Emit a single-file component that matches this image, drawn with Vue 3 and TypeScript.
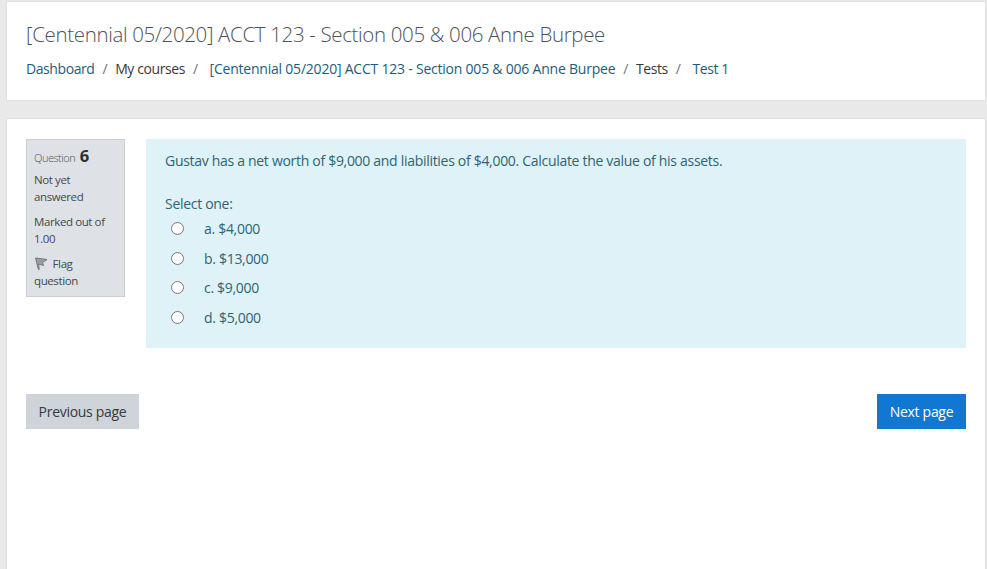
<template>
  <div class="page">
    <header class="card head">
      <h1>{{ course }}</h1>
      <nav class="crumbs">
        <a>Dashboard</a><span class="sep">/</span>
        <span class="plain">My courses</span><span class="sep wide">/</span>
        <a class="long">{{ course }}</a><span class="sep">/</span>
        <span class="plain">Tests</span><span class="sep wide">/</span>
        <a>Test 1</a>
      </nav>
    </header>
    <main class="card body">
      <section class="question">
        <aside class="info">
          <div class="qno"><span>Question</span> <b>6</b></div>
          <p>Not yet answered</p>
          <p>Marked out of 1.00</p>
          <p class="flag">
            <svg width="14" height="14" viewBox="0 0 14 14">
              <path d="M1.5 1 L13 2.5 L8.5 5.5 L9.5 8.5 L4.6 7 L5.2 12.5 L4.4 12.5 Z" fill="#9a9ea3" stroke="#74787d" stroke-width="1" stroke-linejoin="round" />
            </svg>
            Flag question
          </p>
        </aside>
        <div class="content">
          <p class="text">Gustav has a net worth of $9,000 and liabilities of $4,000. Calculate the value of his assets.</p>
          <div class="prompt">Select one:</div>
          <label v-for="o in options" :key="o" class="opt">
            <input type="radio" name="q6" />
            <span>{{ o }}</span>
          </label>
        </div>
      </section>
      <div class="actions">
        <button class="prev">Previous page</button>
        <button class="next">Next page</button>
      </div>
    </main>
  </div>
</template>

<script setup lang="ts">
const course = '[Centennial 05/2020] ACCT 123 - Section 005 & 006 Anne Burpee'
const options: string[] = ['a. $4,000', 'b. $13,000', 'c. $9,000', 'd. $5,000']
</script>

<style scoped>
.page {
  height: 569px;
  overflow: hidden;
  background: #e9e9e9;
  padding: 1px 1px 0 6px;
  box-sizing: border-box;
  font-family: "Open Sans", "Noto Sans", sans-serif;
  font-size: 14px;
  color: #373a3c;
}
.card {
  background: #fff;
  border: 1px solid #e2e2e2;
  box-sizing: border-box;
}
.head {
  height: 100px;
  padding: 17px 19px 0;
}
h1 {
  margin: 0;
  font-size: 20.5px;
  font-weight: 300;
  line-height: 30px;
  color: #4f5256;
  letter-spacing: -0.35px;
  white-space: nowrap;
}
.crumbs {
  margin-top: 10px;
  line-height: 20px;
  font-size: 14px;
  letter-spacing: -0.42px;
  white-space: nowrap;
}
.crumbs a {
  color: #1d5c7c;
}
.crumbs .long {
  letter-spacing: -0.22px;
}
.plain {
  color: #373a3c;
}
.sep {
  color: #6a737b;
  margin: 0 8px;
}
.sep.wide {
  margin-right: 12px;
}
.body {
  margin-top: 17px;
  height: 461px;
  padding: 20px 19px 0;
}
.question {
  display: flex;
  align-items: flex-start;
  gap: 21px;
}
.info {
  width: 99px;
  height: 158px;
  flex: none;
  box-sizing: border-box;
  background: #dee2e6;
  border: 1px solid #cbcfd3;
  padding: 6px 7px 0;
  font-size: 11.5px;
  line-height: 17px;
  letter-spacing: -0.4px;
  color: #45484b;
}
.qno {
  line-height: 20px;
  color: #4f5256;
}
.qno span {
  font-size: 11px;
  font-weight: 300;
  letter-spacing: -0.5px;
}
.qno b {
  font-size: 16.5px;
  font-weight: 700;
  color: #2b2e31;
  margin-left: 2px;
}
.info p {
  margin: 3px 0 0;
}
.info p + p {
  margin-top: 8px;
}
.flag svg {
  vertical-align: -3px;
  margin-right: 2px;
}
.content {
  flex: 1;
  height: 209px;
  box-sizing: border-box;
  background: #def2f8;
  padding: 12px 19px 0;
  color: #2f6473;
  font-size: 14px;
  letter-spacing: -0.3px;
}
.text {
  margin: 0;
  line-height: 20px;
}
.prompt {
  margin-top: 23px;
  line-height: 20px;
}
.opt {
  display: flex;
  align-items: center;
  height: 29.6px;
  padding-left: 6px;
}
.opt input {
  width: 13px;
  height: 13px;
  margin: 0 20px 0 0;
  flex: none;
}
.actions {
  display: flex;
  justify-content: space-between;
  margin-top: 46px;
}
button {
  height: 35px;
  border: none;
  font: inherit;
  letter-spacing: -0.3px;
  padding: 0;
}
.prev {
  width: 113px;
  background: #ced4da;
  color: #373a3c;
}
.next {
  width: 89px;
  background: #1177d1;
  color: #fff;
}
</style>
